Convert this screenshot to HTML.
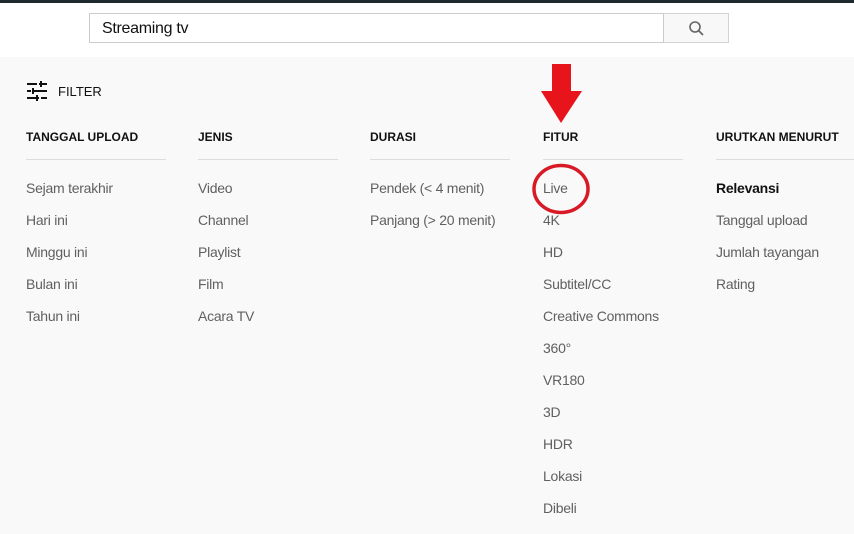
<html><head><style>
body{margin:0;width:854px;height:534px;overflow:hidden;background:#f9f9f9;font-family:"Liberation Sans",sans-serif;position:relative}
.top{position:absolute;left:0;top:0;width:854px;height:57px;background:#fff;border-top:3px solid #1f2a2e;box-sizing:border-box}
.search{position:absolute;left:89px;top:13px;width:575px;height:30px;border:1px solid #ccc;box-sizing:border-box;font-size:16px;color:#111;padding:6px 12px;letter-spacing:-.3px}
.btn{position:absolute;left:664px;top:13px;width:65px;height:30px;border:1px solid #d3d3d3;border-left:none;box-sizing:border-box;background:#f8f8f8}
.col{position:absolute;top:130px;width:140px}
.h{font-size:12px;font-weight:bold;color:#111;height:29px;border-bottom:1px solid #ddd;margin-bottom:12px}
.i{font-size:14px;color:#606060;height:32px;line-height:32px;letter-spacing:-.25px}
</style></head><body>
<div class="top"></div>
<div class="search">Streaming tv</div>
<div class="btn"><svg width="65" height="30" viewBox="0 0 65 30"><circle cx="31" cy="13" r="5" fill="none" stroke="#666" stroke-width="1.6"/><line x1="34.5" y1="16.5" x2="39" y2="21" stroke="#666" stroke-width="1.8"/></svg></div>
<svg style="position:absolute;left:27px;top:81px" width="22" height="20" viewBox="0 0 22 20"><g fill="#111"><rect x="0" y="2" width="20" height="2"/><rect x="0" y="9" width="20" height="2"/><rect x="0" y="16" width="20" height="2"/></g><g fill="#f9f9f9"><rect x="10" y="2" width="2" height="2"/><rect x="4" y="9" width="2" height="2"/><rect x="12" y="16" width="2" height="2"/></g><g fill="#111"><rect x="13" y="0" width="2" height="6"/><rect x="5" y="7" width="2" height="6"/><rect x="9" y="14" width="2" height="6"/></g></svg>
<div style="position:absolute;left:58px;top:84px;font-size:13px;color:#111">FILTER</div>
<div class="col" style="left:26px"><div class="h">TANGGAL UPLOAD</div><div class="i">Sejam terakhir</div><div class="i">Hari ini</div><div class="i">Minggu ini</div><div class="i">Bulan ini</div><div class="i">Tahun ini</div></div>
<div class="col" style="left:198px"><div class="h">JENIS</div><div class="i">Video</div><div class="i">Channel</div><div class="i">Playlist</div><div class="i">Film</div><div class="i">Acara TV</div></div>
<div class="col" style="left:370px"><div class="h">DURASI</div><div class="i">Pendek (&lt; 4 menit)</div><div class="i">Panjang (&gt; 20 menit)</div></div>
<div class="col" style="left:543px"><div class="h">FITUR</div><div class="i">Live</div><div class="i">4K</div><div class="i">HD</div><div class="i">Subtitel/CC</div><div class="i">Creative Commons</div><div class="i">360°</div><div class="i">VR180</div><div class="i">3D</div><div class="i">HDR</div><div class="i">Lokasi</div><div class="i">Dibeli</div></div>
<div class="col" style="left:716px;width:150px"><div class="h">URUTKAN MENURUT</div><div class="i" style="color:#111;font-weight:bold">Relevansi</div><div class="i">Tanggal upload</div><div class="i">Jumlah tayangan</div><div class="i">Rating</div></div>
<svg style="position:absolute;left:0;top:0" width="854" height="534"><polygon points="552,64 571,64 571,91 582,91 561,123 541,91 552,91" fill="#e8141c"/><ellipse cx="561" cy="189" rx="27" ry="23.5" fill="none" stroke="#d81a26" stroke-width="3.5"/></svg>
</body></html>
